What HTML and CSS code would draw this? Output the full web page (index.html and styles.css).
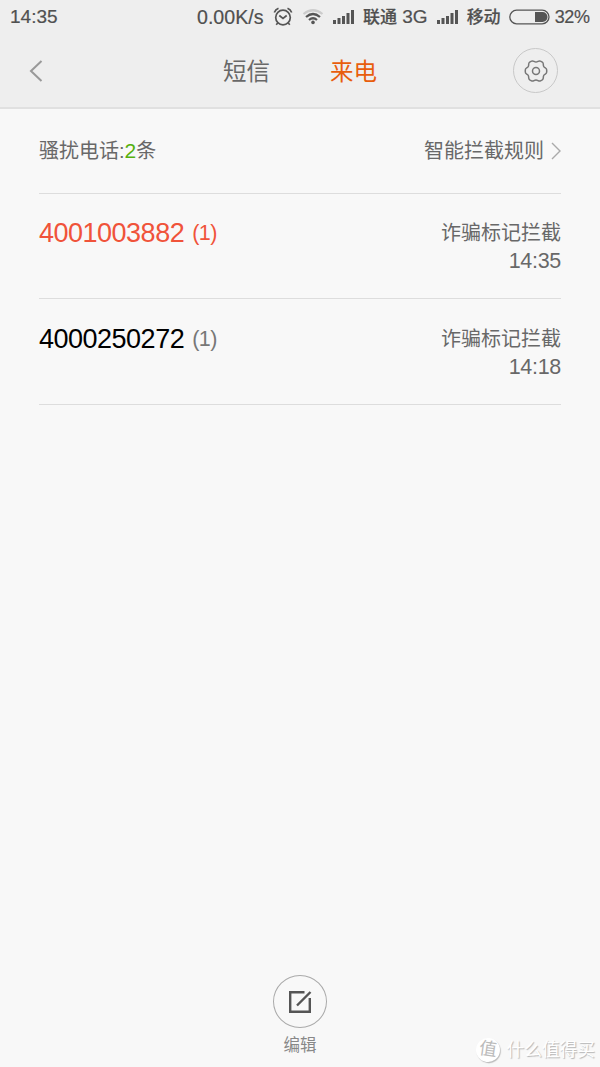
FILE: index.html
```html
<!DOCTYPE html>
<html lang="zh-CN">
<head>
    <meta charset="UTF-8">
    <meta name="viewport" content="width=device-width, initial-scale=1.0">
    <title>骚扰拦截</title>
    <link rel="stylesheet" href="styles.css">
</head>
<body>
    <header>
        <div class="status-bar">
            <span class="clock">14:35</span>
            <span class="speed">0.00K/s</span>
            <svg class="alarm" width="20" height="20" viewBox="0 0 20 20">
                <circle cx="10" cy="10.5" r="7.3"/>
                <path d="M6.3 8.5L10 11.5L13.7 8.5M1.3 5.5Q2.5 2.5 5.5 1.3M14.5 1.3Q17.5 2.5 18.7 5.5M5 15.8L3.2 17.8M15 15.8L16.8 17.8"/>
            </svg>
            <svg class="wifi" width="22" height="18" viewBox="0 0 22 18">
                <path class="weak" d="M1.5 6Q11 -1.5 20.5 6"/>
                <path d="M4 9Q11 3 18 9M7 12Q11 8.5 15 12"/>
                <circle cx="11" cy="14.4" r="1.8"/>
            </svg>
            <svg class="signal" width="21" height="16" viewBox="0 0 21 16">
                <path d="M0 11h3v4H0zM4.5 9h3v6h-3zM9 7h3v8H9zM13.5 4h3v11h-3zM18 1h3v14h-3z"/>
            </svg>
            <span class="carrier"><b>联通</b> 3G</span>
            <svg class="signal second" width="21" height="16" viewBox="0 0 21 16">
                <path d="M0 11h3v4H0zM4.5 9h3v6h-3zM9 7h3v8H9zM13.5 4h3v11h-3zM18 1h3v14h-3z"/>
            </svg>
            <span class="carrier"><b>移动</b></span>
            <svg class="battery" width="41" height="16" viewBox="0 0 41 16">
                <rect x="0.8" y="1.2" width="39.2" height="13.6" rx="6.8"/>
                <path d="M26 3H33.5A5 5 0 0 1 33.5 13H26Z"/>
            </svg>
            <span class="percent">32%</span>
        </div>
        <nav>
            <svg class="back" width="14" height="22" viewBox="0 0 14 22">
                <path d="M12.5 1L2 11L12.5 21"/>
            </svg>
            <div class="tabs">
                <span>短信</span>
                <span class="active">来电</span>
            </div>
            <div class="settings">
                <svg width="24" height="24" viewBox="0 0 24 24">
                    <path d="M7.5 2.2C9.3 1.1 10 3.1 12 3.1S14.7 1.1 16.5 2.2L18.3 3.2C20.1 4.3 18.8 5.8 19.7 7.5C20.7 9.3 22.7 8.8 22.7 10.9V13.1C22.7 15.2 20.7 14.7 19.7 16.5C18.8 18.2 20.1 19.7 18.3 20.8L16.5 21.8C14.7 22.9 14 20.9 12 20.9S9.3 22.9 7.5 21.8L5.7 20.8C3.9 19.7 5.2 18.2 4.3 16.5C3.3 14.7 1.3 15.2 1.3 13.1V10.9C1.3 8.8 3.3 9.3 4.3 7.5C5.2 5.8 3.9 4.3 5.7 3.2Z"/>
                    <circle cx="12" cy="12" r="3.5"/>
                </svg>
            </div>
        </nav>
    </header>

    <main>
        <div class="summary">
            <span>骚扰电话:<span class="count">2</span>条</span>
            <span class="rules">智能拦截规则
                <svg width="10" height="18" viewBox="0 0 10 18">
                    <path d="M1 1L9 9L1 17"/>
                </svg>
            </span>
        </div>
        <div class="call unread">
            <div class="number">4001003882<span class="times">(1)</span></div>
            <div class="info">诈骗标记拦截<span class="time">14:35</span></div>
        </div>
        <div class="call">
            <div class="number">4000250272<span class="times">(1)</span></div>
            <div class="info">诈骗标记拦截<span class="time">14:18</span></div>
        </div>
    </main>

    <footer>
        <div class="edit">
            <svg width="24" height="24" viewBox="0 0 24 24">
                <path d="M16.5 2.2H2.2V21.8H21.8V8M9 15.5L22.5 2"/>
            </svg>
        </div>
        <span>编辑</span>
    </footer>

    <div class="watermark">
        <span class="badge">值</span>
        <span>什么值得买</span>
    </div>
</body>
</html>
```
FILE: styles.css
```css
* {
    box-sizing: border-box;
}
body {
    display: flex;
    flex-direction: column;
    height: 1067px;
    margin: 0;
    overflow: hidden;
    font-family: "Liberation Sans", "Noto Sans CJK SC", sans-serif;
    color: #686868;
    background-color: #f8f8f8;
}
svg {
    display: block;
    flex: none;
    fill: none;
    stroke: #555;
}
header {
    height: 109px;
    background-color: #eee;
    border-bottom: 2px solid #e0e0e0;
}
.status-bar {
    display: flex;
    align-items: center;
    height: 34px;
    padding-left: 10px;
    font-size: 19px;
    line-height: 34px;
    color: #505050;
    white-space: nowrap;
    -webkit-text-stroke: 0.2px #505050;
}
.status-bar > * {
    flex: none;
}
.clock {
    width: 187px;
}
.speed {
    width: 76px;
    font-size: 19.6px;
}
.alarm {
    margin-right: 9px;
    margin-top: -1px;
    stroke-width: 1.7;
}
.wifi {
    margin-right: 9px;
    stroke-width: 2.2;
}
.wifi .weak {
    stroke: #ccc;
}
.wifi circle {
    fill: #555;
    stroke: none;
}
.signal {
    margin-right: 9px;
    fill: #555;
    stroke: none;
}
.second {
    margin-left: 9px;
}
.carrier b {
    font-size: 17px;
    font-weight: 500;
}
.battery {
    margin-left: 8px;
    margin-right: 5px;
    stroke-width: 1.3;
}
.battery path {
    fill: #555;
    stroke: none;
}
.percent {
    font-size: 18px;
    letter-spacing: -0.3px;
}
nav {
    display: flex;
    align-items: center;
    justify-content: space-between;
    height: 73px;
    padding: 0 42px 0 29px;
}
.back {
    stroke: #999;
    stroke-width: 2;
}
.tabs {
    display: flex;
    gap: 60px;
    margin-left: 44px;
    font-size: 23.5px;
    line-height: 34px;
    padding-top: 2px;
}
.active {
    color: #e85d0c;
}
.settings {
    display: flex;
    align-items: center;
    justify-content: center;
    width: 45px;
    height: 45px;
    border: 1px solid #c8c8c8;
    border-radius: 50%;
}
.settings svg {
    stroke: #777;
    stroke-width: 1.5;
}
main {
    flex: 1;
    padding: 0 39px;
}
.summary {
    display: flex;
    align-items: center;
    justify-content: space-between;
    height: 85px;
    padding-bottom: 3px;
    border-bottom: 1px solid #ddd;
    font-size: 20px;
}
.count {
    font-size: 21px;
    color: #54b00c;
}
.rules {
    display: flex;
    align-items: center;
    gap: 7px;
}
.rules svg {
    margin-top: 2px;
    stroke: #aaa;
    stroke-width: 1.4;
}
.call {
    display: flex;
    justify-content: space-between;
    height: 105px;
    padding-top: 25px;
    border-bottom: 1px solid #ddd;
}
.call:last-child {
    height: 106px;
    padding-top: 26px;
}
.number {
    font-size: 27px;
    line-height: 28px;
    letter-spacing: -0.5px;
    color: #000;
}
.times {
    margin-left: 8px;
    font-size: 21.5px;
    vertical-align: 2px;
    color: #777;
}
.unread .number,
.unread .times {
    color: #f0533a;
}
.info {
    font-size: 20px;
    line-height: 28px;
    text-align: right;
}
.time {
    display: block;
    font-size: 21.5px;
    letter-spacing: -0.3px;
}
footer {
    display: flex;
    flex-direction: column;
    align-items: center;
    height: 92px;
    font-size: 16.5px;
    line-height: 24px;
    color: #888;
}
.edit {
    display: flex;
    align-items: center;
    justify-content: center;
    width: 54px;
    height: 53px;
    margin-bottom: 5px;
    border: 1px solid #aaa;
    border-radius: 50%;
}
.edit svg {
    stroke-width: 2.4;
}
/* sits over the bottom right corner */
.watermark {
    position: absolute;
    right: 5px;
    bottom: 4px;
    display: flex;
    align-items: center;
    gap: 7px;
    font-size: 17.7px;
    line-height: 26px;
    color: #fff;
    text-shadow: 1px 1px 1px #b4b4b4;
}
.badge {
    width: 24px;
    height: 24px;
    border-radius: 50%;
    background-color: #fff;
    box-shadow: 1px 1px 1px #bbb;
    line-height: 23px;
    text-align: center;
    color: #bbb;
    text-shadow: none;
    transform: rotate(8deg);
}
```
